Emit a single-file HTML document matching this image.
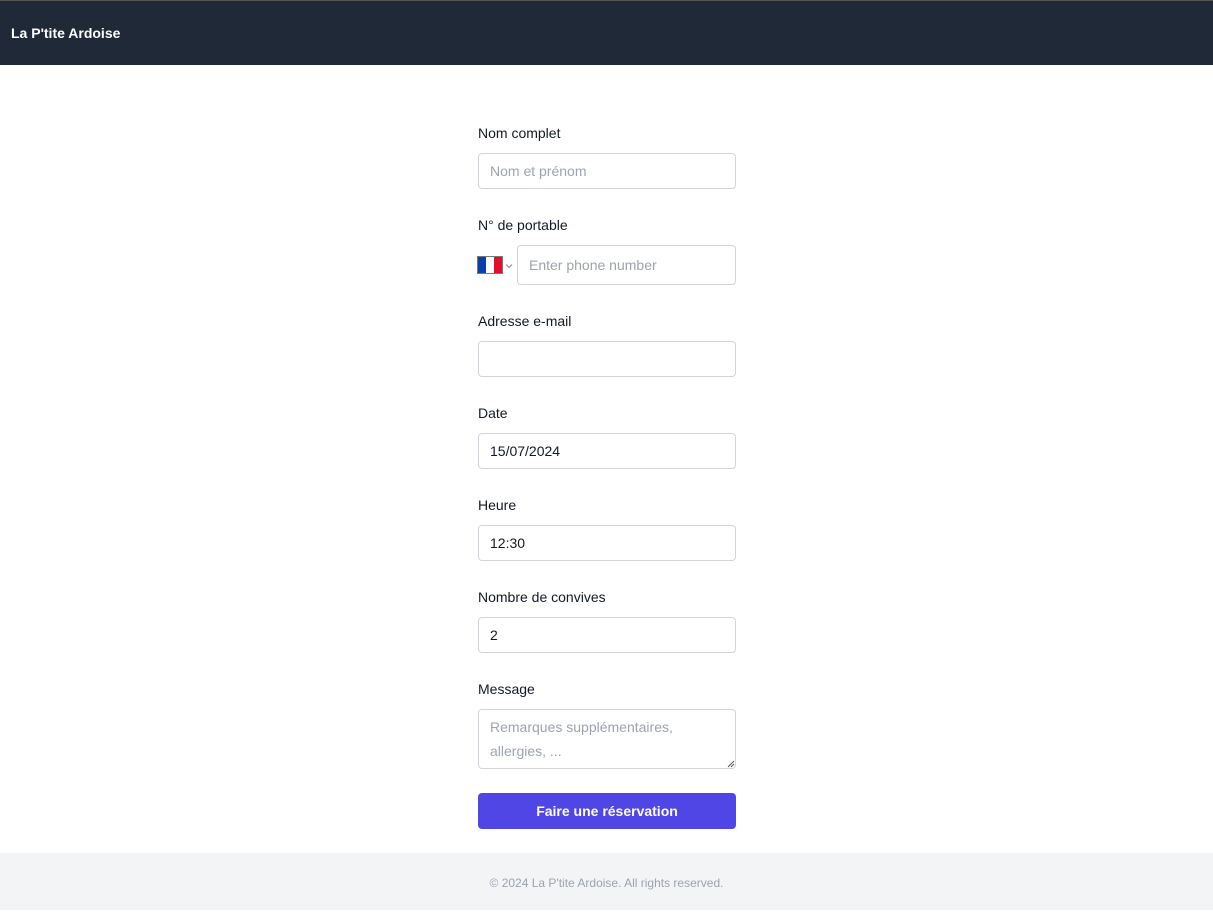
<!DOCTYPE html>
<html><head><meta charset="utf-8"><style>
*{box-sizing:border-box;margin:0;padding:0}
body{width:1213px;height:910px;background:#fff;font-family:"Liberation Sans",sans-serif;position:relative;overflow:hidden}
.hdr{position:absolute;left:0;top:0;width:1213px;height:65px;background:#1f2937;border-top:1px solid #555}
.hdr span{position:absolute;left:11px;top:24px;color:#fff;font-weight:bold;font-size:14px}
.l{position:absolute;left:478px;font-size:14px;color:#111827}
.i{position:absolute;left:478px;width:258px;height:36px;border:1px solid #d1d5db;border-radius:4px;font-size:14px;color:#111827;padding:0 11px;line-height:34px}
.ph{color:#9ca3af}
.btn{position:absolute;left:478px;top:793px;width:258px;height:36px;background:#4f46e5;border-radius:4px;color:#fff;font-weight:bold;font-size:14px;text-align:center;line-height:36px}
.ft{position:absolute;left:0;top:853px;width:1213px;height:57px;background:#f3f4f6;color:#9ca3af;font-size:12px;text-align:center;line-height:60px}
</style></head><body>
<div class="hdr"><span>La P'tite Ardoise</span></div>
<div class="l" style="top:125px">Nom complet</div>
<div class="i ph" style="top:153px">Nom et prénom</div>
<div class="l" style="top:217px">N° de portable</div>
<div style="position:absolute;left:477px;top:256px;width:26px;height:18px;border:1px solid #777;display:flex"><div style="flex:1;background:#0a3ea8"></div><div style="flex:1;background:#fff"></div><div style="flex:1;background:#e0102a"></div></div>
<svg style="position:absolute;left:505px;top:263px" width="8" height="6" viewBox="0 0 8 6"><path d="M1 1.5L4 4.5L7 1.5" fill="none" stroke="#888" stroke-width="1"/></svg>
<div class="i ph" style="top:245px;left:517px;width:219px;height:40px;line-height:38px">Enter phone number</div>
<div class="l" style="top:313px">Adresse e-mail</div>
<div class="i" style="top:341px"></div>
<div class="l" style="top:405px">Date</div>
<div class="i" style="top:433px">15/07/2024</div>
<div class="l" style="top:497px">Heure</div>
<div class="i" style="top:525px">12:30</div>
<div class="l" style="top:589px">Nombre de convives</div>
<div class="i" style="top:617px">2</div>
<div class="l" style="top:681px">Message</div>
<div class="i ph" style="top:709px;height:60px;line-height:24px;padding-top:5px">Remarques supplémentaires, allergies, ...</div>
<svg style="position:absolute;left:727px;top:760px" width="8" height="8" viewBox="0 0 8 8"><path d="M7 1L1 7M7 4L4 7" stroke="#555" stroke-width="1"/></svg>
<div class="btn">Faire une réservation</div>
<div class="ft">© 2024 La P'tite Ardoise. All rights reserved.</div>
</body></html>
